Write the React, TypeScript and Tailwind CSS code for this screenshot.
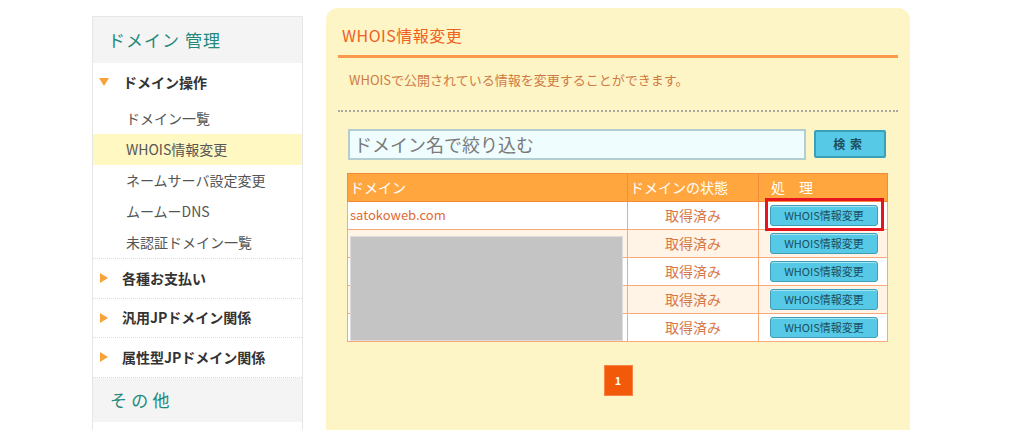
import React from "react";

const jp = "font-['Noto_Sans_CJK_JP',sans-serif]";

function Triangle({ down }: { down?: boolean }) {
  return down ? (
    <svg width="10" height="8" viewBox="0 0 10 8" className="shrink-0">
      <path d="M0 0 H10 L5 8 Z" fill="#f7a23a" />
    </svg>
  ) : (
    <svg width="8" height="10" viewBox="0 0 8 10" className="shrink-0">
      <path d="M0 0 V10 L8 5 Z" fill="#f7a23a" />
    </svg>
  );
}

function WhoisButton() {
  return (
    <button
      type="button"
      className="h-[21px] w-[108px] rounded-[3px] border border-[#3f9db6] bg-[#55c9e6] text-[11px] leading-none text-[#1c4f60] shadow-[inset_0_1px_0_#a5e6f5]"
    >
      WHOIS情報変更
    </button>
  );
}

export default function App() {
  const sub = ["ドメイン一覧", "WHOIS情報変更", "ネームサーバ設定変更", "ムームーDNS", "未認証ドメイン一覧"];
  const groups = ["各種お支払い", "汎用JPドメイン関係", "属性型JPドメイン関係"];
  const rows = ["satokoweb.com", "", "", "", ""];

  return (
    <div className={`min-h-[430px] w-[1024px] overflow-hidden bg-white ${jp}`}>
      <div className="flex items-start gap-[23px] pl-[92px] pt-2">
        {/* サイドバー */}
        <aside className="mt-2 w-[211px] border border-b-0 border-[#e6e6e6] bg-white">
          <div className="flex h-[46px] items-center bg-[#f4f4f4] pl-[15px] text-[17px] tracking-[0.06em] text-[#22897a]">
            ドメイン 管理
          </div>
          <div className="flex h-[38px] items-center gap-[14px] pl-[6px] text-[14px] font-bold text-[#333]">
            <Triangle down />
            <span>ドメイン操作</span>
          </div>
          <ul className="border-b border-dotted border-[#dcdcdc] pt-[2px]">
            {sub.map((s) => (
              <li
                key={s}
                className={`flex h-[31px] items-center pl-[33px] text-[14px] text-[#555] ${
                  s === "WHOIS情報変更" ? "bg-[#fff8c2]" : ""
                }`}
              >
                {s}
              </li>
            ))}
          </ul>
          {groups.map((g) => (
            <div
              key={g}
              className="flex h-[39.5px] items-center gap-[14px] border-b border-dotted border-[#dcdcdc] pl-[7px] text-[14px] font-bold text-[#333]"
            >
              <Triangle />
              <span>{g}</span>
            </div>
          ))}
          <div className="flex h-[44px] items-center bg-[#f4f4f4] pl-[17px] text-[17px] tracking-[0.25em] text-[#22897a]">
            その他
          </div>
          <div className="h-[20px]" />
        </aside>

        {/* メイン */}
        <main className="h-[440px] w-[584px] rounded-[12px] bg-[#fdf5c6] px-3 pt-[16px]">
          <h1 className="pl-1 text-[16px] leading-[22px] tracking-[0.03em] text-[#f0601e]">WHOIS情報変更</h1>
          <div className="mt-[9px] h-[3px] bg-[#fb9a4c]" />
          <p className="pl-[11px] pt-[12px] text-[13px] text-[#cf7a45]">
            WHOISで公開されている情報を変更することができます。
          </p>
          <div className="mt-[20px] border-t-2 border-dotted border-[#a8a8a0]" />

          <div className="mt-[17px] flex items-center gap-2 px-[10px]">
            <input
              readOnly
              placeholder="ドメイン名で絞り込む"
              className="h-[31px] w-[458px] border-2 border-[#b3cdd0] bg-[#effdff] px-[4px] text-[18px] text-[#777] placeholder:text-[#7a7a7a] outline-none"
            />
            <button
              type="button"
              className="h-[28px] w-[72px] rounded-[2px] border-2 border-[#3b9fb8] bg-[#55c9e6] text-[12px] font-bold tracking-[0.4em] text-[#1c4f60]"
            >
              検索
            </button>
          </div>

          <div className="relative mx-[9px] mt-[13px]">
            <table className="w-[541px] border-collapse text-[14px]">
              <thead>
                <tr className="h-[28px] bg-[#ffa63f] text-left text-white">
                  <th className="w-[280px] border border-[#f58a3a] pl-[2px] font-normal">ドメイン</th>
                  <th className="w-[131px] border border-[#f58a3a] pl-[2px] font-normal">ドメインの状態</th>
                  <th className="border border-[#f58a3a] pl-[12px] font-normal">処　理</th>
                </tr>
              </thead>
              <tbody>
                {rows.map((d, i) => (
                  <tr key={i} className={`h-[28px] ${i % 2 ? "bg-[#fff4e6]" : "bg-white"}`}>
                    <td className="border border-[#f9a87a] pl-[2px] text-[13px] text-[#e06a34]">{d}</td>
                    <td className="border border-[#f9a87a] text-center text-[#d6794a]">取得済み</td>
                    <td className="border border-[#f9a87a] text-center align-middle">
                      <div className="flex justify-center pl-[2px]">
                        <WhoisButton />
                      </div>
                    </td>
                  </tr>
                ))}
              </tbody>
            </table>
            {/* 伏せ字 */}
            <div className="absolute left-[3px] top-[63px] h-[105px] w-[273px] border border-[#dcdcdc] bg-[#c4c4c4]" />
            {/* 強調枠 */}
            <div className="absolute left-[418px] top-[25px] h-[33px] w-[119px] border-[3px] border-[#e6141e]" />
          </div>

          <div className="mt-[23px] flex justify-center">
            <span className="flex h-[31px] w-[29px] items-center justify-center border border-[#f7824a] bg-[#f25a0a] text-[11px] font-bold text-white">
              1
            </span>
          </div>
        </main>
      </div>
    </div>
  );
}
